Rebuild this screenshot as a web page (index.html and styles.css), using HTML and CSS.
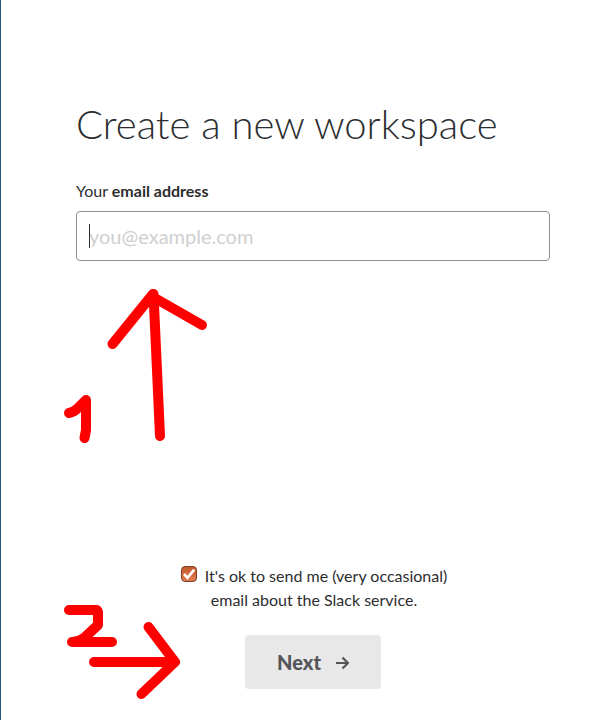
FILE: index.html
```html
<!DOCTYPE html>
<html lang="en">
<head>
<meta charset="utf-8">
<meta name="viewport" content="width=device-width, initial-scale=1">
<title>Create a new workspace</title>
<link rel="stylesheet" href="styles.css">
</head>
<body>
<main class="page">
  <form class="signup">
    <h1 class="title">Create a new workspace</h1>
    <label class="field-label" for="email">Your <strong>email address</strong></label>
    <div class="field">
      <input class="field-input" id="email" type="email" placeholder="you@example.com">
      <span class="caret"></span>
    </div>
    <div class="consent">
      <span class="check">
        <input class="check-input" id="consent" type="checkbox" checked>
        <svg class="check-mark" viewBox="0 0 16 16" aria-hidden="true"><path d="M3 8 6.500 11.800 13.200 3.600" fill="none" stroke="#fff" stroke-width="2.600"/></svg>
      </span>
      <label for="consent">It's ok to send me (very occasional)<br>email about the Slack service.</label>
    </div>
    <button class="next" type="submit">Next
      <svg class="next-icon" viewBox="0 0 14 14" aria-hidden="true"><path d="M1 7H12.500M7.500 1.500 13 7 7.500 12.500" fill="none" stroke="currentColor" stroke-width="2.200"/></svg>
    </button>
  </form>
  <svg class="marks" width="596" height="720" viewBox="0 0 596 720" aria-hidden="true">
    <path d="M112.500 344 153 294M153 297 202 325M153.500 294 160 436"/>
    <path d="M69 413Q74 412 78 408L86 400V430L84.500 438"/>
    <path d="M69 610H97L98 612V625L84 638Q79 642 72 642H112"/>
    <path d="M94 662H175M148.500 627 175 662 141.500 694"/>
  </svg>
</main>
</body>
</html>
```
FILE: styles.css
```css
* {
  box-sizing: border-box;
}

body {
  margin: 0;
  background: #fff;
  color: #2c2d30;
  font: 16px/24px Lato, sans-serif;
}

.page {
  position: relative;
  min-height: 100vh;
  padding: 99px 46px 31px 75px;
  border-left: 1px solid #26547c;
}

.signup {
  display: flex;
  flex-direction: column;
}

.title {
  margin: 0 0 30px;
  font-size: 40px;
  line-height: 50px;
  font-weight: 300;
}

.field-label {
  margin-bottom: 8px;
}

.field {
  position: relative;
}

.field-input {
  display: block;
  width: 100%;
  height: 50px;
  padding: 0 12px;
  border: 1px solid #919193;
  border-radius: 4px;
  background: #fff;
  color: #2c2d30;
  font: 20px/24px Lato, sans-serif;
}

.field-input::placeholder {
  color: #cfcfd0;
  opacity: 1;
}

.caret {
  position: absolute;
  top: 13px;
  left: 13px;
  width: 1px;
  height: 24px;
  background: #2c2d30;
}

.consent {
  margin-top: 303px;
  padding-left: 2px;
  text-align: center;
}

.check {
  display: inline-grid;
  width: 16px;
  height: 16px;
  margin-right: 4px;
  vertical-align: baseline;
}

.check-input,
.check-mark {
  grid-area: 1 / 1;
  width: 16px;
  height: 16px;
  margin: 0;
}

.check-input {
  appearance: none;
  border: 1px solid #7d3d22;
  border-radius: 4px;
  background: linear-gradient(#c55a2c, #e07c52);
}

.check-mark {
  pointer-events: none;
}

.next {
  display: flex;
  align-items: center;
  align-self: center;
  gap: 14px;
  height: 54px;
  margin-top: 23px;
  padding: 0 32px;
  border: 0;
  border-radius: 4px;
  background: #e8e8e8;
  color: #555459;
  font: 900 20px/24px Lato, sans-serif;
}

.next-icon {
  width: 14px;
  height: 14px;
  margin-top: 2px;
}

.marks {
  position: absolute;
  top: 0;
  left: -1px;
  pointer-events: none;
  fill: none;
  stroke: #f00;
  stroke-width: 10;
  stroke-linecap: round;
  stroke-linejoin: round;
}
```
